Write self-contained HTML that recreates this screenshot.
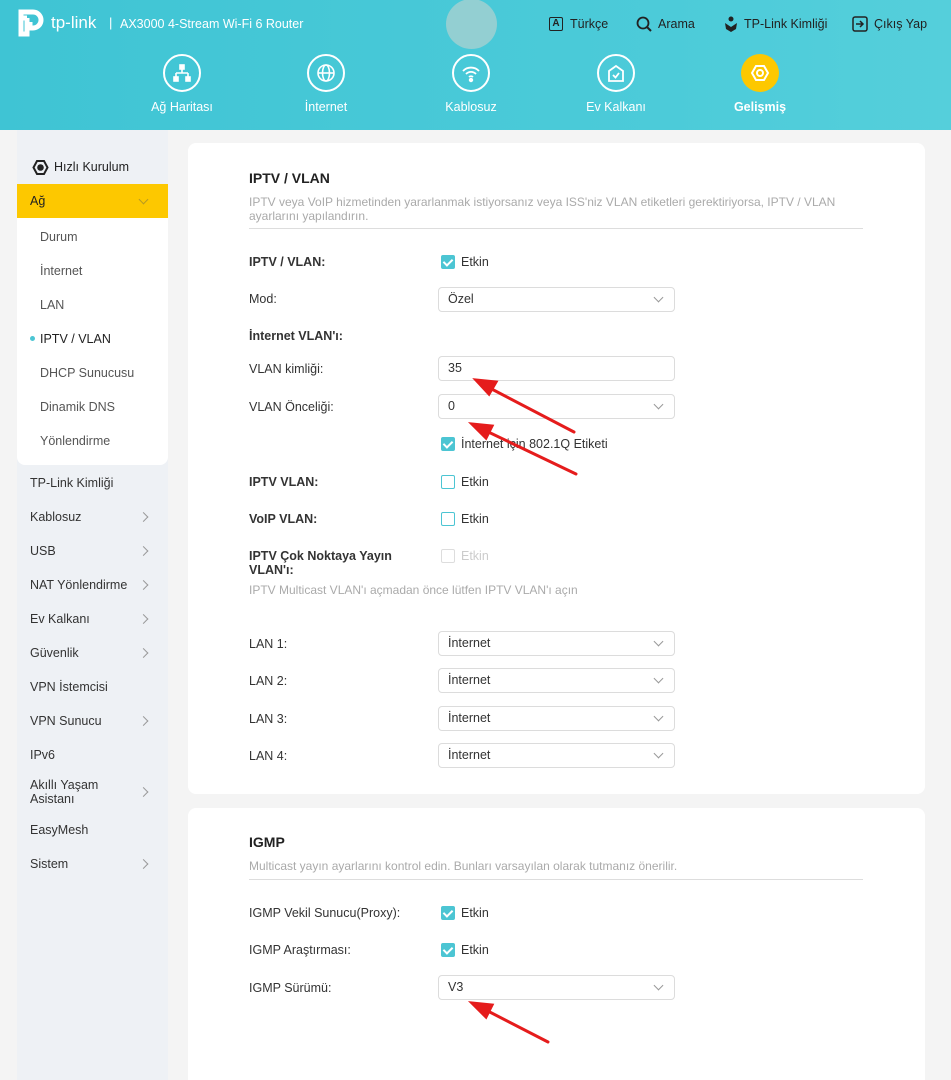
<!DOCTYPE html>
<html><head><meta charset="utf-8">
<style>
*{box-sizing:border-box;margin:0;padding:0}
html,body{width:951px;height:1080px;overflow:hidden}
body{background:#f4f4f4;font-family:"Liberation Sans",Arial,sans-serif;font-size:12.5px;color:#333;position:relative}
.hdr{position:absolute;left:0;top:0;width:951px;height:130px;background:linear-gradient(90deg,#3fc4d4,#4ccbd9 70%,#55cfdb)}
.abs{position:absolute;white-space:nowrap}
.wt{color:#fff}
.nav{position:absolute;top:54px;width:38px;height:38px;border:2px solid #fff;border-radius:50%}
.navl{position:absolute;top:100px;color:#fff;font-size:12.5px;transform:translateX(-50%)}
.side{position:absolute;left:17px;top:130px;width:151px;height:950px;background:#eef1f5}
.grp{position:absolute;left:17px;top:184px;width:151px;height:281px;background:#fff;border-radius:0 0 8px 8px}
.card{position:absolute;left:188px;width:737px;background:#fff;border-radius:8px}
.lbl{position:absolute;left:249px;font-size:12.5px;color:#333;transform:translateY(-50%)}
.b{font-weight:bold}
.sel{position:absolute;left:438px;width:237px;height:25px;border:1px solid #dcdcdc;border-radius:4px;background:#fff;padding-left:9px;line-height:23px;font-size:12.5px;color:#333}
.sel.dd::after{content:"";position:absolute;right:12px;top:6px;width:6px;height:6px;border-right:1.3px solid #999;border-bottom:1.3px solid #999;transform:rotate(45deg)}
.cb{position:absolute;left:441px;width:14px;height:14px;border-radius:2px;background:#4cc5d3}
.cb::after{content:"";position:absolute;left:4px;top:2px;width:4px;height:7px;border-right:2px solid #fff;border-bottom:2px solid #fff;transform:rotate(45deg)}
.cb.off{background:#fff;border:1px solid #4cc5d3}.cb.off::after{display:none}
.cb.dis{background:#fff;border:1px solid #ddd}.cb.dis::after{display:none}
.ck{position:absolute;left:461px;transform:translateY(-50%);font-size:12.5px}
.si{position:absolute;left:40px;transform:translateY(-50%);color:#555;font-size:12.5px}
.s2{position:absolute;left:30px;transform:translateY(-50%);color:#333;font-size:12.5px}
.chev{position:absolute;left:140px;width:7px;height:7px;border-right:1.3px solid #999;border-top:1.3px solid #999;transform:translateY(-50%) rotate(45deg)}
</style></head><body>
<div class="hdr"></div>
<div class="abs" style="left:446px;top:-1px;width:51px;height:50px;border-radius:50%;background:#93cfd2"></div>
<svg class="abs" style="left:16px;top:6px" width="32" height="32" viewBox="0 0 32 32"><path d="M5 12 V6 H17 a8 8 0 0 1 0 16 H14 V16 M11 12 H5 V28 H11 V12" fill="none" stroke="#fff" stroke-width="5"/></svg>
<div class="abs wt" style="left:51px;top:13px;font-size:17px">tp-link</div>
<div class="abs wt" style="left:109px;top:15px;font-size:13px">|</div>
<div class="abs wt" style="left:120px;top:17px;font-size:12.5px">AX3000 4-Stream Wi-Fi 6 Router</div>
<div class="abs" style="left:549px;top:17px;width:14px;height:14px;border:1.5px solid #222;border-radius:2px;font-size:10px;font-weight:bold;text-align:center;line-height:11px;color:#222">A</div>
<div class="abs" style="left:570px;top:17px;color:#222;font-size:12.5px">Türkçe</div>
<svg class="abs" style="left:636px;top:16px" width="16" height="16"><circle cx="7" cy="7" r="5.5" fill="none" stroke="#222" stroke-width="1.8"/><path d="M11 11 L15 15" stroke="#222" stroke-width="2"/></svg>
<div class="abs" style="left:658px;top:17px;color:#222;font-size:12.5px">Arama</div>
<svg class="abs" style="left:724px;top:15px" width="14" height="18"><circle cx="7" cy="4" r="2.5" fill="#222"/><path d="M1 8 L7 12 L13 8 L12 14 L7 17 L2 14Z" fill="#222"/></svg>
<div class="abs" style="left:744px;top:17px;color:#222;font-size:12.5px">TP-Link Kimliği</div>
<svg class="abs" style="left:852px;top:16px" width="16" height="16"><rect x="1" y="1" width="14" height="14" rx="2" fill="none" stroke="#222" stroke-width="1.5"/><path d="M4 8 H11 M8 5 L11 8 L8 11" fill="none" stroke="#222" stroke-width="1.5"/></svg>
<div class="abs" style="left:874px;top:17px;color:#222;font-size:12.5px">Çıkış Yap</div>

<div class="nav" style="left:163px"></div>
<svg class="abs" style="left:172px;top:63px" width="20" height="20" fill="none" stroke="#fff" stroke-width="1.6"><rect x="8" y="2" width="4" height="4" fill="#fff"/><path d="M10 6 V10 M4 10 H16 M4 10 V14 M16 10 V14"/><rect x="2" y="14" width="4" height="4" fill="#fff"/><rect x="14" y="14" width="4" height="4" fill="#fff"/></svg>
<div class="navl" style="left:182px">Ağ Haritası</div>
<div class="nav" style="left:307px"></div>
<svg class="abs" style="left:316px;top:63px" width="20" height="20" fill="none" stroke="#fff" stroke-width="1.6"><circle cx="10" cy="10" r="8"/><ellipse cx="10" cy="10" rx="3.5" ry="8"/><path d="M2 10 H18"/></svg>
<div class="navl" style="left:326px">İnternet</div>
<div class="nav" style="left:452px"></div>
<svg class="abs" style="left:461px;top:63px" width="20" height="20" fill="none" stroke="#fff" stroke-width="1.8"><path d="M2 8 a11 11 0 0 1 16 0 M5 11 a7 7 0 0 1 10 0 M8 14 a3 3 0 0 1 4 0"/><circle cx="10" cy="17" r="1.3" fill="#fff"/></svg>
<div class="navl" style="left:471px">Kablosuz</div>
<div class="nav" style="left:597px"></div>
<svg class="abs" style="left:606px;top:63px" width="20" height="20" fill="none" stroke="#fff" stroke-width="1.8"><path d="M3 18 V8 L10 3 L17 8 V18 Z"/><path d="M7 12 L9.5 14.5 L13 10"/></svg>
<div class="navl" style="left:616px">Ev Kalkanı</div>
<div class="abs" style="left:741px;top:54px;width:38px;height:38px;border-radius:50%;background:#fdc800"></div>
<svg class="abs" style="left:750px;top:63px" width="20" height="20" fill="none" stroke="#fff" stroke-width="2"><path d="M6 3 H14 L18 10 L14 17 H6 L2 10 Z"/><circle cx="10" cy="10" r="3"/></svg>
<div class="navl b" style="left:760px">Gelişmiş</div>

<div class="side"></div>
<div class="grp"></div>
<svg class="abs" style="left:32px;top:159px" width="17" height="17" fill="none" stroke="#222" stroke-width="2"><path d="M5 2 H12 L15.5 8.5 L12 15 H5 L1.5 8.5 Z"/><circle cx="8.5" cy="8.5" r="2.3" fill="#222"/></svg>
<div class="abs" style="left:54px;top:160px;color:#222">Hızlı Kurulum</div>
<div class="abs" style="left:17px;top:184px;width:151px;height:34px;background:#fdc800"></div>
<div class="abs" style="left:30px;top:194px;color:#222">Ağ</div>
<div class="abs" style="left:140px;top:196px;width:7px;height:7px;border-right:1.3px solid #b89a20;border-bottom:1.3px solid #b89a20;transform:rotate(45deg)"></div>
<div class="si" style="top:237px">Durum</div>
<div class="si" style="top:271px">İnternet</div>
<div class="si" style="top:305px">LAN</div>
<div class="abs" style="left:30px;top:336px;width:5px;height:5px;border-radius:50%;background:#4cc5d3"></div>
<div class="si" style="top:339px;color:#222">IPTV / VLAN</div>
<div class="si" style="top:373px">DHCP Sunucusu</div>
<div class="si" style="top:407px">Dinamik DNS</div>
<div class="si" style="top:441px">Yönlendirme</div>
<div class="s2" style="top:483px">TP-Link Kimliği</div>
<div class="s2" style="top:517px">Kablosuz</div><div class="chev" style="top:517px"></div>
<div class="s2" style="top:551px">USB</div><div class="chev" style="top:551px"></div>
<div class="s2" style="top:585px">NAT Yönlendirme</div><div class="chev" style="top:585px"></div>
<div class="s2" style="top:619px">Ev Kalkanı</div><div class="chev" style="top:619px"></div>
<div class="s2" style="top:653px">Güvenlik</div><div class="chev" style="top:653px"></div>
<div class="s2" style="top:687px">VPN İstemcisi</div>
<div class="s2" style="top:721px">VPN Sunucu</div><div class="chev" style="top:721px"></div>
<div class="s2" style="top:755px">IPv6</div>
<div class="s2" style="top:792px;line-height:14px">Akıllı Yaşam<br>Asistanı</div><div class="chev" style="top:792px"></div>
<div class="s2" style="top:830px">EasyMesh</div>
<div class="s2" style="top:864px">Sistem</div><div class="chev" style="top:864px"></div>

<div class="card" style="top:143px;height:651px"></div>
<div class="card" style="top:808px;height:272px;border-radius:8px 8px 0 0"></div>

<div class="abs b" style="left:249px;top:170px;font-size:14px;color:#222">IPTV / VLAN</div>
<div class="abs" style="left:249px;top:195px;font-size:12px;color:#aaa;line-height:14px;white-space:normal;width:600px">IPTV veya VoIP hizmetinden yararlanmak istiyorsanız veya ISS'niz VLAN etiketleri gerektiriyorsa, IPTV / VLAN ayarlarını yapılandırın.</div>
<div class="abs" style="left:249px;top:228px;width:614px;height:1px;background:#ddd"></div>

<div class="lbl b" style="top:262px">IPTV / VLAN:</div>
<div class="cb" style="top:255px"></div><div class="ck" style="top:262px">Etkin</div>
<div class="lbl" style="top:299px">Mod:</div>
<div class="sel dd" style="top:287px">Özel</div>
<div class="lbl b" style="top:336px">İnternet VLAN'ı:</div>
<div class="lbl" style="top:369px">VLAN kimliği:</div>
<div class="sel" style="top:356px">35</div>
<div class="lbl" style="top:407px">VLAN Önceliği:</div>
<div class="sel dd" style="top:394px">0</div>
<div class="cb" style="top:437px"></div><div class="ck" style="top:444px">İnternet için 802.1Q Etiketi</div>
<div class="lbl b" style="top:482px">IPTV VLAN:</div>
<div class="cb off" style="top:475px"></div><div class="ck" style="top:482px">Etkin</div>
<div class="lbl b" style="top:519px">VoIP VLAN:</div>
<div class="cb off" style="top:512px"></div><div class="ck" style="top:519px">Etkin</div>
<div class="lbl b" style="top:563px;line-height:14px">IPTV Çok Noktaya Yayın<br>VLAN'ı:</div>
<div class="cb dis" style="top:549px"></div><div class="ck" style="top:556px;color:#ccc">Etkin</div>
<div class="lbl" style="top:590px;color:#aaa;font-size:12px">IPTV Multicast VLAN'ı açmadan önce lütfen IPTV VLAN'ı açın</div>
<div class="lbl" style="top:644px">LAN 1:</div><div class="sel dd" style="top:631px">İnternet</div>
<div class="lbl" style="top:681px">LAN 2:</div><div class="sel dd" style="top:668px">İnternet</div>
<div class="lbl" style="top:719px">LAN 3:</div><div class="sel dd" style="top:706px">İnternet</div>
<div class="lbl" style="top:756px">LAN 4:</div><div class="sel dd" style="top:743px">İnternet</div>

<div class="abs b" style="left:249px;top:834px;font-size:14px;color:#222">IGMP</div>
<div class="abs" style="left:249px;top:859px;font-size:12px;color:#aaa">Multicast yayın ayarlarını kontrol edin. Bunları varsayılan olarak tutmanız önerilir.</div>
<div class="abs" style="left:249px;top:879px;width:614px;height:1px;background:#ddd"></div>
<div class="lbl" style="top:913px">IGMP Vekil Sunucu(Proxy):</div>
<div class="cb" style="top:906px"></div><div class="ck" style="top:913px">Etkin</div>
<div class="lbl" style="top:950px">IGMP Araştırması:</div>
<div class="cb" style="top:943px"></div><div class="ck" style="top:950px">Etkin</div>
<div class="lbl" style="top:988px">IGMP Sürümü:</div>
<div class="sel dd" style="top:975px">V3</div>

<svg class="abs" style="left:0;top:0" width="951" height="1080">
<g stroke="#e51c1c" stroke-width="3" fill="#e51c1c" stroke-linecap="round">
<path d="M574 432 L484 385"/><path d="M476 380 L496 382 L489 394 Z"/>
<path d="M576 474 L480 428"/><path d="M472 424 L492 426 L486 438 Z"/>
<path d="M548 1042 L480 1007"/><path d="M472 1003 L492 1005 L486 1017 Z"/>
</g></svg>
</body></html>
